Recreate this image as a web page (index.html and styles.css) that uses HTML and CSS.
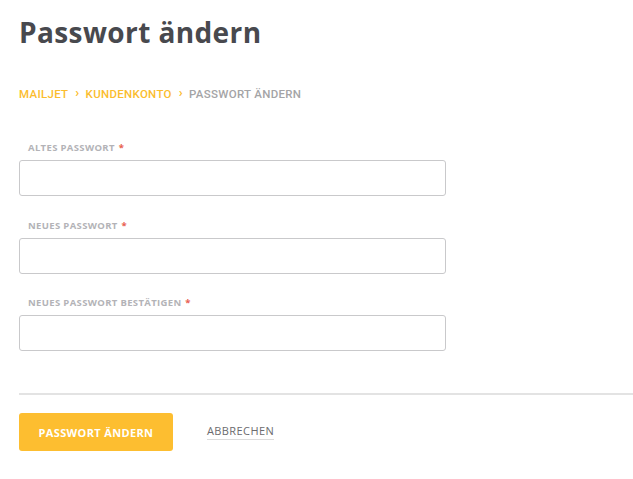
FILE: index.html
```html
<!DOCTYPE html>
<html lang="de">
<head>
<meta charset="utf-8">
<title>Passwort ändern</title>
<link rel="stylesheet" href="styles.css">
</head>
<body>
<div class="page">
  <h1 class="title">Passwort ändern</h1>
  <nav class="crumbs">
    <a class="crumb">MAILJET</a>
    <span class="sep">›</span>
    <a class="crumb">KUNDENKONTO</a>
    <span class="sep">›</span>
    <span class="crumb current">PASSWORT ÄNDERN</span>
  </nav>
  <form class="form">
    <div class="field">
      <label class="label">ALTES PASSWORT <span class="req">*</span></label>
      <input class="input" type="password">
    </div>
    <div class="field">
      <label class="label">NEUES PASSWORT <span class="req">*</span></label>
      <input class="input" type="password">
    </div>
    <div class="field">
      <label class="label">NEUES PASSWORT BESTÄTIGEN <span class="req">*</span></label>
      <input class="input" type="password">
    </div>
  </form>
  <div class="divider"></div>
  <div class="actions">
    <button class="btn-primary" type="button">PASSWORT ÄNDERN</button>
    <a class="btn-link">ABBRECHEN</a>
  </div>
</div>
</body>
</html>
```
FILE: styles.css
```css
html, body {
  margin: 0;
  padding: 0;
  background: #ffffff;
}
body {
  font-family: "Open Sans", "Liberation Sans", sans-serif;
}
.page {
  padding-left: 19px;
}
.title {
  margin: 0;
  padding-top: 13px;
  font-size: 28px;
  line-height: 38px;
  font-weight: 700;
  color: #48494e;
  letter-spacing: 0.4px;
}
.crumbs {
  display: flex;
  align-items: center;
  margin-top: 36px;
  height: 14px;
  font-family: Roboto, "Liberation Sans", sans-serif;
  font-size: 11.5px;
  font-weight: 500;
  line-height: 14px;
  letter-spacing: 0.3px;
}
.crumb {
  color: #fbbd2e;
}
.crumb.current {
  color: #a4a4a6;
}
.sep {
  color: #fbbd2e;
  font-weight: 700;
  font-size: 13px;
  margin: 0 6px 0 7px;
  position: relative;
  top: -1px;
}
.form {
  display: flex;
  flex-direction: column;
  gap: 23.5px;
  margin-top: 41px;
}
.field {
  display: flex;
  flex-direction: column;
}
.label {
  padding-left: 9px;
  font-size: 9.5px;
  line-height: 12px;
  font-weight: 700;
  color: #b3b3b7;
  letter-spacing: 0.35px;
  margin-bottom: 6px;
}
.req {
  color: #e8604f;
  margin-left: 1px;
}
.input {
  box-sizing: border-box;
  width: 427px;
  height: 36px;
  margin: 0;
  border: 1px solid #c9c9cb;
  border-radius: 3px;
  background: #fff;
  padding: 0 10px;
  font: inherit;
}
.divider {
  margin-top: 42px;
  height: 2px;
  background: #e3e3e3;
}
.actions {
  display: flex;
  align-items: center;
  margin-top: 18px;
  gap: 34px;
}
.btn-primary {
  box-sizing: border-box;
  width: 154px;
  height: 38px;
  border: none;
  border-radius: 3px;
  background: #fdbe30;
  color: #ffffff;
  font-family: "Open Sans", "Liberation Sans", sans-serif;
  font-size: 11px;
  font-weight: 700;
  letter-spacing: 0.35px;
  padding: 0;
}
.btn-link {
  font-size: 11px;
  color: #6b6b6e;
  line-height: 14px;
  padding-bottom: 1px;
  border-bottom: 1px solid #dcdcdc;
  letter-spacing: 0.4px;
}
```
